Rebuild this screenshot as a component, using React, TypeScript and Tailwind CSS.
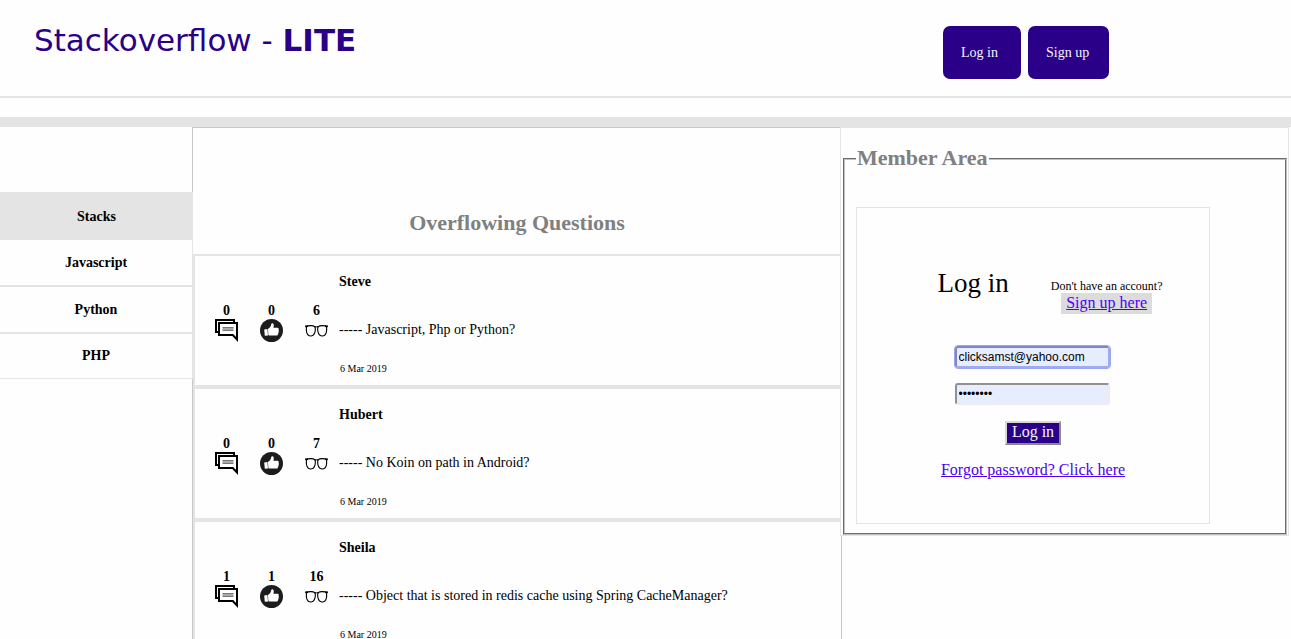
import React from "react";

const stacks = ["Javascript", "Python", "PHP"];

const questions = [
  { author: "Steve", text: "Javascript, Php or Python?", date: "6 Mar 2019", answers: 0, likes: 0, views: 6 },
  { author: "Hubert", text: "No Koin on path in Android?", date: "6 Mar 2019", answers: 0, likes: 0, views: 7 },
  { author: "Sheila", text: "Object that is stored in redis cache using Spring CacheManager?", date: "6 Mar 2019", answers: 1, likes: 1, views: 16 },
];

function CommentsIcon() {
  return (
    <svg viewBox="0 0 23 23" className="size-[23px]" aria-hidden="true">
      <path d="M4 13H1V1H19V4" fill="none" stroke="#000" strokeWidth="2" />
      <path d="M4 4H22V20.5L17.8 16H4Z" fill="#fff" stroke="#000" strokeWidth="2" />
      <path d="M7.5 8.5H18.5M7.5 11.5H18.5" stroke="#777" strokeWidth="1" />
      <path d="M7.5 10H18.5" stroke="#aaa" strokeWidth="2" />
    </svg>
  );
}

function LikeIcon() {
  return (
    <svg viewBox="0 0 23 23" className="size-[23px]" aria-hidden="true">
      <circle cx="11.5" cy="11.5" r="11.5" fill="#1b1c1c" />
      <path
        d="M4.2 10.4L7.4 10L8 16.4L4.8 16.8ZM7.9 10C10 9 10.9 7.4 11.3 4.8C11.6 3.9 13.7 3.9 13.8 6C13.8 7.2 13.6 8 13.4 8.8H17.4C18.8 8.9 19 10.1 18.5 10.9C19.1 11.5 19 12.6 18.4 13.1C18.7 13.9 18.5 14.7 18 15C18 16.1 17.3 16.6 16.3 16.6H9.8L8.4 16.2Z"
        fill="#fff"
      />
    </svg>
  );
}

function GlassesIcon() {
  return (
    <svg viewBox="0 0 23 23" className="size-[23px]" aria-hidden="true">
      <path
        d="M1.5 7.5C3.5 6.3 8.2 6.3 10 7.8C10.9 10.5 10 14.6 8.4 16C7 17 4.4 17 3.1 16C1.5 14.6 1.2 10.5 1.5 7.5ZM21.5 7.5C19.5 6.3 14.8 6.3 13 7.8C12.1 10.5 13 14.6 14.6 16C16 17 18.6 17 19.9 16C21.5 14.6 21.8 10.5 21.5 7.5Z"
        fill="none"
        stroke="#000"
        strokeWidth="1.1"
      />
      <path d="M0 6.4L3 6.2V7.4L1.6 8.8L0.2 8ZM23 6.4L20 6.2V7.4L21.4 8.8L22.8 8ZM9.6 7Q11.5 7.9 13.4 7V8.7Q11.5 8 9.6 8.7Z" fill="#000" />
    </svg>
  );
}

function Stat({ value, label, children }: { value: number; label: string; children: React.ReactNode }) {
  return (
    <div className="flex w-[23px] flex-col items-center" title={label}>
      <span className="leading-4 font-bold">{value}</span>
      {children}
    </div>
  );
}

export default function App() {
  return (
    <div className="flex h-screen min-h-screen flex-col overflow-hidden bg-[#fefefe] font-['Liberation_Serif',serif] text-sm text-black">
      <header className="flex h-[98px] shrink-0 items-start justify-between border-b-2 border-[#e4e4e4] pt-[26px] pr-[182px] pl-[34px]">
        <h1 className="font-['DejaVu_Sans',sans-serif] text-[31px] leading-7 text-[#2a0089]">
          Stackoverflow - <b>LITE</b>
        </h1>
        <nav className="flex gap-[7px] text-[#f5f5f5]">
          <a href="#login" className="w-[78px] rounded-[7px] bg-[#2a0089] pl-[18px] leading-[53px]">Log in</a>
          <a href="#signup" className="w-[81px] rounded-[7px] bg-[#2a0089] pl-[18px] leading-[53px]">Sign up</a>
        </nav>
      </header>
      <div className="mt-[19px] h-[10px] shrink-0 bg-[#e4e4e4]" />

      <div className="grid min-h-0 grow grid-cols-[192px_minmax(0,1fr)_449px] pr-[2px]">
        <nav className="z-10 -mr-px pt-[65px] text-center font-bold">
          <h2 className="bg-[#e4e4e4] pt-px leading-[47px]">Stacks</h2>
          <ul className="border-r border-[#e4e4e4]">
            {stacks.map((name) => (
              <li key={name} className="group border-b-2 border-[#e4e4e4] last:border-b">
                <a href={"#" + name} className="block leading-[45px] group-last:leading-[44px]">{name}</a>
              </li>
            ))}
          </ul>
        </nav>

        <main className="-mr-[2px] overflow-hidden border border-b-0 border-[#c8c8c8]">
          <h2 className="pt-[82px] pb-[18px] text-center text-[22px] leading-[26px] font-bold text-[#808080]">Overflowing Questions</h2>
          {questions.map((q) => (
            <article key={q.author} className="flex h-[133px] border-2 border-r-0 border-[#e4e4e4] pl-5">
              <div className="flex gap-[22px] pt-[47px]">
                <Stat value={q.answers} label="Answers"><CommentsIcon /></Stat>
                <Stat value={q.likes} label="Likes"><LikeIcon /></Stat>
                <Stat value={q.views} label="Views"><GlassesIcon /></Stat>
              </div>
              <div className="pt-[17px] pl-[11px]">
                <h3 className="leading-[18px] font-bold">{q.author}</h3>
                <p className="pt-[30px] leading-[18px]">----- {q.text}</p>
                <p className="pt-6 pl-px text-[10px] leading-3">{q.date}</p>
              </div>
            </article>
          ))}
        </main>

        <aside className="z-10 self-start border border-[#e4e4e4] bg-[#fefefe] pt-[18px] pr-px pl-[2px]">
          <fieldset className="border-2 border-[#c0c0c0] px-[11px] pb-[9px] [border-style:groove]">
            <legend className="px-px pb-px text-[22px] leading-6 font-bold text-[#808080]">Member Area</legend>
            <form className="mt-9 flex h-[317px] w-[354px] flex-col items-center border border-[#e4e4e4] pt-[57px] text-base" onSubmit={(e) => e.preventDefault()}>
              <div className="flex gap-[42px] pl-[34px]">
                <h3 className="text-[27px] leading-9">Log in</h3>
                <div className="flex flex-col items-center pt-[14px]">
                  <span className="text-xs leading-[14px]">Don't have an account?</span>
                  <a href="#signup" className="bg-[#dcdcdc] px-[5px] pb-px leading-5 text-[#4c00f5] underline">Sign up here</a>
                </div>
              </div>
              <div className="mt-8 flex flex-col items-center gap-[15px] pr-[2px]">
                <input
                  type="email"
                  aria-label="Email"
                  defaultValue="clicksamst@yahoo.com"
                  className="h-[22px] w-[155px] rounded-[3px] border-2 border-[#7f86c4] border-r-[#a3abf0] border-b-[#a3abf0] bg-[#e6edff] px-[2px] font-['Liberation_Sans',sans-serif] text-xs outline-1 outline-[#9ba5f8]"
                />
                <input
                  type="password"
                  aria-label="Password"
                  defaultValue="password"
                  className="h-[22px] w-[155px] rounded-[3px] border-2 border-[#929292] border-r-[#ececec] border-b-[#ececec] bg-[#e6edff] px-[2px] font-['Liberation_Sans',sans-serif] text-xs"
                />
              </div>
              <button type="submit" className="mt-4 border-2 border-[#d8d8d8] border-r-[#8a8a8a] border-b-[#8a8a8a] bg-[#2a0089] px-[5px] pb-[2px] leading-[18px] text-[#f5f5f5]">Log in</button>
              <a href="#forgot" className="mt-[15px] leading-5 text-[#4c00f5] underline">Forgot password? Click here</a>
            </form>
          </fieldset>
        </aside>
      </div>
    </div>
  );
}
